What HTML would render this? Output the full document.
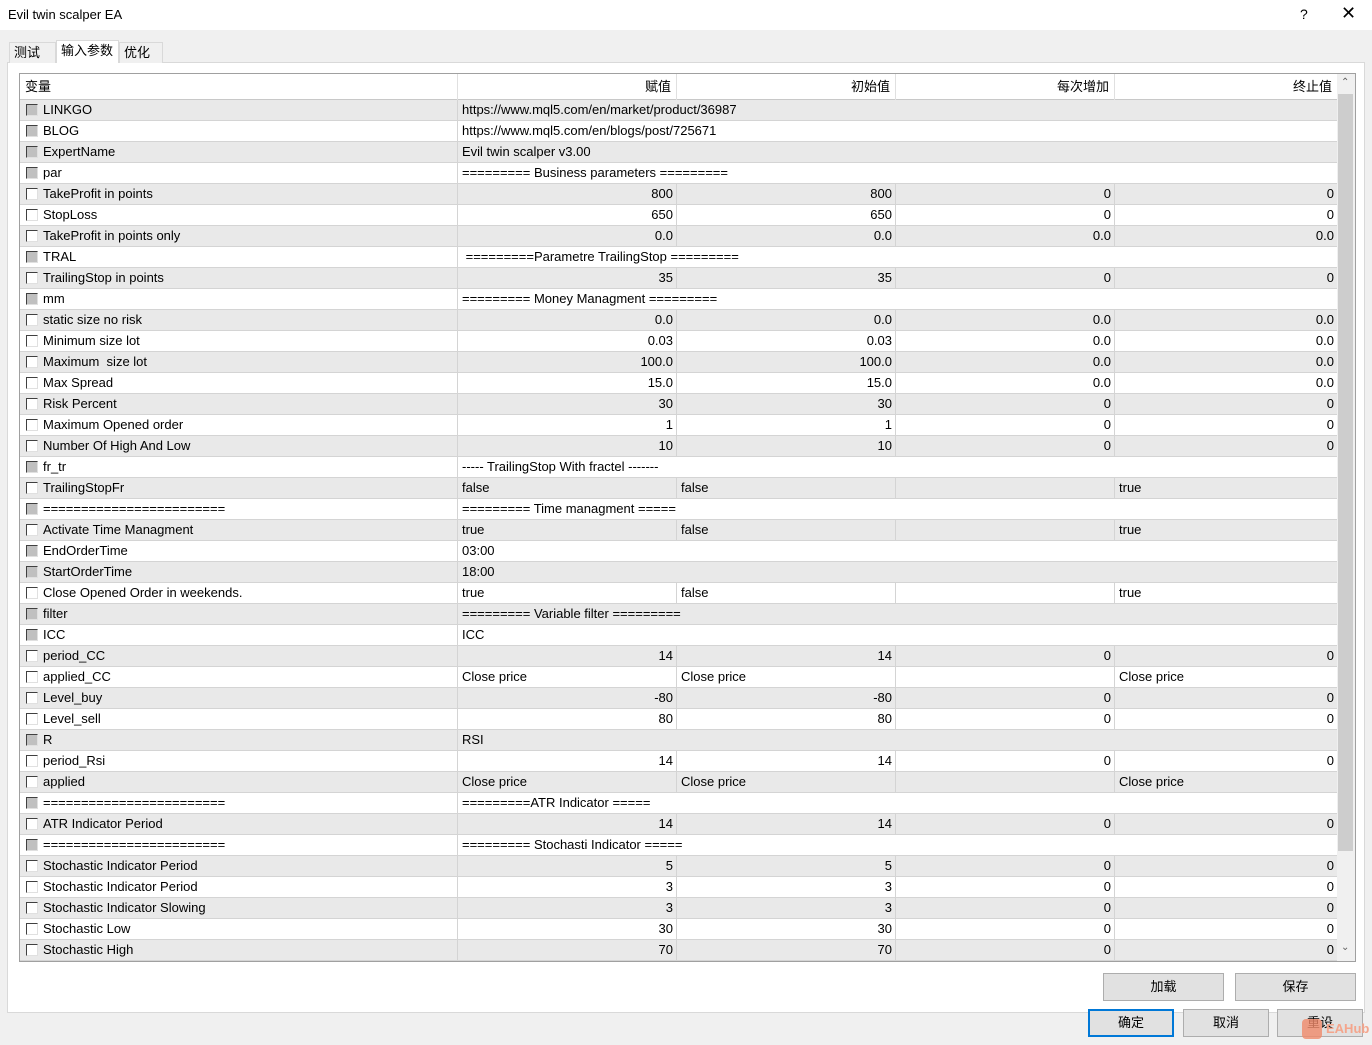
<!DOCTYPE html>
<html><head><meta charset="utf-8">
<style>
*{box-sizing:border-box;margin:0;padding:0}
body{width:1372px;height:1045px;background:#f0f0f0;font-family:"Liberation Sans","Noto Sans CJK SC",sans-serif;font-size:13px;color:#000;position:relative;overflow:hidden}
.title{position:absolute;left:0;top:0;width:1372px;height:30px;background:#fff}
.tt{position:absolute;left:8px;top:7px;font-size:13px}
.q{position:absolute;left:1300px;top:6px;font-size:14px}
.x{position:absolute;left:1341px;top:3px;font-size:18px}
.tab{position:absolute;top:42px;height:21px;border:1px solid #d9d9d9;border-bottom:none;background:#f0f0f0;padding:0 4px;line-height:19px;font-size:13px}
.panel{position:absolute;left:7px;top:62px;width:1358px;height:951px;background:#fff;border:1px solid #d9d9d9}
.grid{position:absolute;left:19px;top:73px;width:1337px;height:889px;border:1px solid #a0a0a0;background:#fff;overflow:hidden}
.r{position:absolute;left:0;width:1317px;height:21px;border-bottom:1px solid #d4d4d4;display:flex;margin-top:1px}
.r.g{background:#e9e9e9}
.r div{height:20px;line-height:20px;border-right:1px solid #d4d4d4;white-space:nowrap;overflow:hidden;padding:0 3px}
.c0{width:438px;padding-left:23px!important;position:relative}
.c1,.c2,.c3{width:219px;text-align:right}
.c4{width:222px;text-align:right;border-right:none!important}
.l{text-align:left!important;padding-left:4px!important}
.sp{width:879px;text-align:left;padding-left:4px!important;border-right:none!important}
.cb{display:block;position:absolute;left:6px;top:4px;width:12px;height:12px;border:1px solid;border-color:#404040 #e0e0e0 #e0e0e0 #404040;background:#fff}
.cb.d{background:#c0c0c0}
.hd{position:absolute;left:0;top:0;width:1317px;height:26px;display:flex;border-bottom:1px solid #c8c8c8;background:#fff}
.hd div{height:26px;line-height:26px;border-right:1px solid #e0e0e0;padding:0 5px}
.sb{position:absolute;left:1317px;top:0;width:18px;height:887px;background:#f0f0f0}
.th{position:absolute;left:1px;top:20px;width:15px;height:757px;background:#cdcdcd}
.btn{position:absolute;height:28px;background:#e1e1e1;border:1px solid #adadad;text-align:center;line-height:26px;font-size:13px}
</style></head><body>
<div class="title"><span class="tt">Evil twin scalper EA</span><span class="q">?</span><span class="x">✕</span></div>
<div class="panel"></div>
<div class="tab" style="left:9px;width:47px">测试</div>
<div class="tab" style="left:56px;top:40px;height:23px;width:63px;background:#fff;border-color:#d9d9d9">输入参数</div>
<div class="tab" style="left:119px;width:44px">优化</div>
<div class="grid">
<div class="hd"><div style="width:438px">变量</div><div style="width:219px;text-align:right">赋值</div><div style="width:219px;text-align:right">初始值</div><div style="width:219px;text-align:right">每次增加</div><div style="width:222px;text-align:right;border:none">终止值</div></div>
<div class="sb"><div style="position:absolute;left:4px;top:3px;font-size:10px;color:#606060">&#8963;</div><div class="th"></div><div style="position:absolute;left:4px;top:868px;font-size:10px;color:#606060">&#8964;</div></div>

<div class="r g" style="top:25px"><div class="c0"><i class="cb d"></i>LINKGO</div><div class="sp">https://www.mql5.com/en/market/product/36987</div></div>
<div class="r" style="top:46px"><div class="c0"><i class="cb d"></i>BLOG</div><div class="sp">https://www.mql5.com/en/blogs/post/725671</div></div>
<div class="r g" style="top:67px"><div class="c0"><i class="cb d"></i>ExpertName</div><div class="sp">Evil twin scalper v3.00</div></div>
<div class="r" style="top:88px"><div class="c0"><i class="cb d"></i>par</div><div class="sp">========= Business parameters =========</div></div>
<div class="r g" style="top:109px"><div class="c0"><i class="cb"></i>TakeProfit in points</div><div class="c1">800</div><div class="c2">800</div><div class="c3">0</div><div class="c4">0</div></div>
<div class="r" style="top:130px"><div class="c0"><i class="cb"></i>StopLoss</div><div class="c1">650</div><div class="c2">650</div><div class="c3">0</div><div class="c4">0</div></div>
<div class="r g" style="top:151px"><div class="c0"><i class="cb"></i>TakeProfit in points only</div><div class="c1">0.0</div><div class="c2">0.0</div><div class="c3">0.0</div><div class="c4">0.0</div></div>
<div class="r" style="top:172px"><div class="c0"><i class="cb d"></i>TRAL</div><div class="sp">&nbsp;=========Parametre TrailingStop =========</div></div>
<div class="r g" style="top:193px"><div class="c0"><i class="cb"></i>TrailingStop in points</div><div class="c1">35</div><div class="c2">35</div><div class="c3">0</div><div class="c4">0</div></div>
<div class="r" style="top:214px"><div class="c0"><i class="cb d"></i>mm</div><div class="sp">========= Money Managment =========</div></div>
<div class="r g" style="top:235px"><div class="c0"><i class="cb"></i>static size no risk</div><div class="c1">0.0</div><div class="c2">0.0</div><div class="c3">0.0</div><div class="c4">0.0</div></div>
<div class="r" style="top:256px"><div class="c0"><i class="cb"></i>Minimum size lot</div><div class="c1">0.03</div><div class="c2">0.03</div><div class="c3">0.0</div><div class="c4">0.0</div></div>
<div class="r g" style="top:277px"><div class="c0"><i class="cb"></i>Maximum&nbsp; size lot</div><div class="c1">100.0</div><div class="c2">100.0</div><div class="c3">0.0</div><div class="c4">0.0</div></div>
<div class="r" style="top:298px"><div class="c0"><i class="cb"></i>Max Spread</div><div class="c1">15.0</div><div class="c2">15.0</div><div class="c3">0.0</div><div class="c4">0.0</div></div>
<div class="r g" style="top:319px"><div class="c0"><i class="cb"></i>Risk Percent</div><div class="c1">30</div><div class="c2">30</div><div class="c3">0</div><div class="c4">0</div></div>
<div class="r" style="top:340px"><div class="c0"><i class="cb"></i>Maximum Opened order</div><div class="c1">1</div><div class="c2">1</div><div class="c3">0</div><div class="c4">0</div></div>
<div class="r g" style="top:361px"><div class="c0"><i class="cb"></i>Number Of High And Low</div><div class="c1">10</div><div class="c2">10</div><div class="c3">0</div><div class="c4">0</div></div>
<div class="r" style="top:382px"><div class="c0"><i class="cb d"></i>fr_tr</div><div class="sp">----- TrailingStop With fractel -------</div></div>
<div class="r g" style="top:403px"><div class="c0"><i class="cb"></i>TrailingStopFr</div><div class="c1 l">false</div><div class="c2 l">false</div><div class="c3"></div><div class="c4 l">true</div></div>
<div class="r" style="top:424px"><div class="c0"><i class="cb d"></i>========================</div><div class="sp">========= Time managment =====</div></div>
<div class="r g" style="top:445px"><div class="c0"><i class="cb"></i>Activate Time Managment</div><div class="c1 l">true</div><div class="c2 l">false</div><div class="c3"></div><div class="c4 l">true</div></div>
<div class="r" style="top:466px"><div class="c0"><i class="cb d"></i>EndOrderTime</div><div class="sp">03:00</div></div>
<div class="r g" style="top:487px"><div class="c0"><i class="cb d"></i>StartOrderTime</div><div class="sp">18:00</div></div>
<div class="r" style="top:508px"><div class="c0"><i class="cb"></i>Close Opened Order in weekends.</div><div class="c1 l">true</div><div class="c2 l">false</div><div class="c3"></div><div class="c4 l">true</div></div>
<div class="r g" style="top:529px"><div class="c0"><i class="cb d"></i>filter</div><div class="sp">========= Variable filter =========</div></div>
<div class="r" style="top:550px"><div class="c0"><i class="cb d"></i>ICC</div><div class="sp">ICC</div></div>
<div class="r g" style="top:571px"><div class="c0"><i class="cb"></i>period_CC</div><div class="c1">14</div><div class="c2">14</div><div class="c3">0</div><div class="c4">0</div></div>
<div class="r" style="top:592px"><div class="c0"><i class="cb"></i>applied_CC</div><div class="c1 l">Close price</div><div class="c2 l">Close price</div><div class="c3"></div><div class="c4 l">Close price</div></div>
<div class="r g" style="top:613px"><div class="c0"><i class="cb"></i>Level_buy</div><div class="c1">-80</div><div class="c2">-80</div><div class="c3">0</div><div class="c4">0</div></div>
<div class="r" style="top:634px"><div class="c0"><i class="cb"></i>Level_sell</div><div class="c1">80</div><div class="c2">80</div><div class="c3">0</div><div class="c4">0</div></div>
<div class="r g" style="top:655px"><div class="c0"><i class="cb d"></i>R</div><div class="sp">RSI</div></div>
<div class="r" style="top:676px"><div class="c0"><i class="cb"></i>period_Rsi</div><div class="c1">14</div><div class="c2">14</div><div class="c3">0</div><div class="c4">0</div></div>
<div class="r g" style="top:697px"><div class="c0"><i class="cb"></i>applied</div><div class="c1 l">Close price</div><div class="c2 l">Close price</div><div class="c3"></div><div class="c4 l">Close price</div></div>
<div class="r" style="top:718px"><div class="c0"><i class="cb d"></i>========================</div><div class="sp">=========ATR Indicator =====</div></div>
<div class="r g" style="top:739px"><div class="c0"><i class="cb"></i>ATR Indicator Period</div><div class="c1">14</div><div class="c2">14</div><div class="c3">0</div><div class="c4">0</div></div>
<div class="r" style="top:760px"><div class="c0"><i class="cb d"></i>========================</div><div class="sp">========= Stochasti Indicator =====</div></div>
<div class="r g" style="top:781px"><div class="c0"><i class="cb"></i>Stochastic Indicator Period</div><div class="c1">5</div><div class="c2">5</div><div class="c3">0</div><div class="c4">0</div></div>
<div class="r" style="top:802px"><div class="c0"><i class="cb"></i>Stochastic Indicator Period</div><div class="c1">3</div><div class="c2">3</div><div class="c3">0</div><div class="c4">0</div></div>
<div class="r g" style="top:823px"><div class="c0"><i class="cb"></i>Stochastic Indicator Slowing</div><div class="c1">3</div><div class="c2">3</div><div class="c3">0</div><div class="c4">0</div></div>
<div class="r" style="top:844px"><div class="c0"><i class="cb"></i>Stochastic Low</div><div class="c1">30</div><div class="c2">30</div><div class="c3">0</div><div class="c4">0</div></div>
<div class="r g" style="top:865px"><div class="c0"><i class="cb"></i>Stochastic High</div><div class="c1">70</div><div class="c2">70</div><div class="c3">0</div><div class="c4">0</div></div>
</div>
<div class="btn" style="left:1103px;top:973px;width:121px">加载</div>
<div class="btn" style="left:1235px;top:973px;width:121px">保存</div>
<div class="btn" style="left:1088px;top:1009px;width:86px;border:2px solid #0078d7;line-height:24px">确定</div>
<div class="btn" style="left:1183px;top:1009px;width:86px">取消</div>
<div class="btn" style="left:1277px;top:1009px;width:86px">重设</div>
<div style="position:absolute;left:1302px;top:1019px;width:20px;height:20px;border-radius:4px;background:#f08a6a;opacity:.8"></div>
<div style="position:absolute;left:1326px;top:1021px;font-size:13px;font-weight:bold;color:#f4a58c">EAHub</div>
</body></html>
